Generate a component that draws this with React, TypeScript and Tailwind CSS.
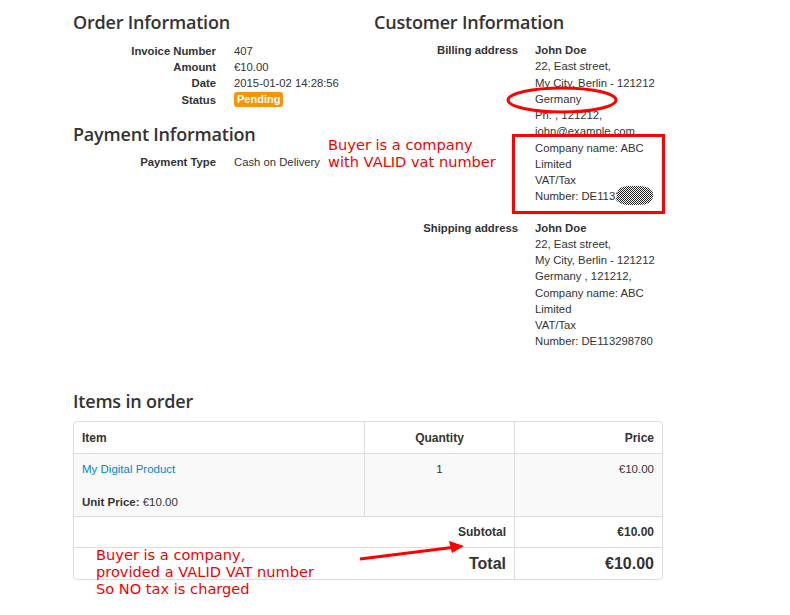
import React from "react";

const H = ({ children, className = "" }: { children: React.ReactNode; className?: string }) => (
  <h2 className={`font-['Open_Sans',sans-serif] text-[18px] leading-6 font-semibold tracking-[-0.2px] text-[#333] ${className}`}>{children}</h2>
);

const Row = ({ label, children }: { label: string; children: React.ReactNode }) => (
  <div className="flex">
    <div className="w-[143px] shrink-0 text-right font-bold">{label}</div>
    <div className="ml-[18px]">{children}</div>
  </div>
);

export default function App() {
  const red = "text-[#f40000] font-['DejaVu_Sans',sans-serif] text-[14.6px] leading-[17px]";
  return (
    <div className="relative w-[790px] h-[615px] overflow-hidden bg-white font-['Liberation_Sans',Arial,sans-serif] text-[11.3px] text-[#333]">
      <div className="pl-[73px] pt-[10px] w-[663px]">
        <div className="flex">
          {/* left column */}
          <div className="w-[301px] shrink-0">
            <H>Order Information</H>
            <div className="mt-[9px] leading-4">
              <Row label="Invoice Number">407</Row>
              <Row label="Amount">€10.00</Row>
              <Row label="Date">2015-01-02 14:28:56</Row>
              <div className="flex items-center h-[17px]">
                <div className="w-[143px] shrink-0 text-right font-bold">Status</div>
                <div className="ml-[18px] flex">
                  <span className="inline-block rounded-[3px] bg-[#f89406] px-[3px] text-[11px] leading-[15px] font-bold text-white">Pending</span>
                </div>
              </div>
            </div>
            <H className="mt-[14px]">Payment Information</H>
            <div className="mt-[8px] leading-4">
              <Row label="Payment Type">Cash on Delivery</Row>
            </div>
          </div>
          {/* right column */}
          <div className="flex-1">
            <H>Customer Information</H>
            <div className="mt-[8px] leading-[16.25px]">
              <div className="flex">
                <div className="w-[144px] shrink-0 text-right font-bold">Billing address</div>
                <div className="ml-[17px] w-[128px]">
                  <div className="font-bold">John Doe</div>
                  <div>22, East street,</div>
                  <div>My City, Berlin - 121212</div>
                  <div>Germany</div>
                  <div>Ph: , 121212,</div>
                  <div>john@example.com</div>
                  <div>Company name: ABC</div>
                  <div>Limited</div>
                  <div>VAT/Tax</div>
                  <div>Number: DE113298780</div>
                </div>
              </div>
              <div className="flex mt-[15px]">
                <div className="w-[144px] shrink-0 text-right font-bold">Shipping address</div>
                <div className="ml-[17px] w-[128px]">
                  <div className="font-bold">John Doe</div>
                  <div>22, East street,</div>
                  <div>My City, Berlin - 121212</div>
                  <div>Germany , 121212,</div>
                  <div>Company name: ABC</div>
                  <div>Limited</div>
                  <div>VAT/Tax</div>
                  <div>Number: DE113298780</div>
                </div>
              </div>
            </div>
          </div>
        </div>

        <H className="mt-[39.5px]">Items in order</H>
        <div className="mt-[8px] w-[590px] rounded-[4px] border border-[#ddd] overflow-hidden leading-4 text-[11.5px]">
          <div className="grid grid-cols-[290px_150px_1fr] font-bold text-[12px]">
            <div className="px-[8px] pt-[8px] pb-[7px]">Item</div>
            <div className="px-[8px] pt-[8px] pb-[7px] text-center border-l border-[#ddd]">Quantity</div>
            <div className="px-[8px] pt-[8px] pb-[7px] text-right border-l border-[#ddd]">Price</div>
          </div>
          <div className="grid grid-cols-[290px_150px_1fr] bg-[#f9f9f9] border-t border-[#ddd]">
            <div className="px-[8px] pt-[7px] pb-[6px]">
              <div className="text-[#0088cc]">My Digital Product</div>
              <div className="mt-[17px]"><span className="font-bold">Unit Price:</span> €10.00</div>
            </div>
            <div className="px-[8px] pt-[7px] text-center border-l border-[#ddd]">1</div>
            <div className="px-[8px] pt-[7px] text-right border-l border-[#ddd]">€10.00</div>
          </div>
          <div className="grid grid-cols-[440px_1fr] border-t border-[#ddd] font-bold text-[12px]">
            <div className="px-[8px] py-[7px] text-right">Subtotal</div>
            <div className="px-[8px] py-[7px] text-right border-l border-[#ddd]">€10.00</div>
          </div>
          <div className="grid grid-cols-[440px_1fr] border-t border-[#ddd] font-bold text-[16px]">
            <div className="px-[8px] py-[7px] leading-[17px] text-right">Total</div>
            <div className="px-[8px] py-[7px] leading-[17px] text-right border-l border-[#ddd]">€10.00</div>
          </div>
        </div>
      </div>

      {/* annotations */}
      <div className={`absolute left-[328px] top-[136px] ${red}`}>
        <div>Buyer is a company</div>
        <div>with VALID vat number</div>
      </div>
      <div className={`absolute left-[96px] top-[546px] ${red}`}>
        <div>Buyer is a company,</div>
        <div>provided a VALID VAT number</div>
        <div>So NO tax is charged</div>
      </div>
      <svg className="absolute left-0 top-0 pointer-events-none" width="790" height="615">
        <defs>
          <pattern id="chk" width="2" height="2" patternUnits="userSpaceOnUse">
            <rect width="2" height="2" fill="#fff" />
            <rect width="1" height="1" fill="#222" />
            <rect x="1" y="1" width="1" height="1" fill="#222" />
          </pattern>
        </defs>
        <ellipse cx="562" cy="100" rx="54" ry="12" fill="none" stroke="#f00" strokeWidth="3" />
        <rect x="513.5" y="135.5" width="150" height="77" fill="none" stroke="#f00" strokeWidth="3" />
        <path d="M618 190 Q622 185 640 186 Q655 187 653 197 Q651 206 636 205 Q620 206 616 200 Z" fill="url(#chk)" />
        <line x1="360" y1="559" x2="452" y2="547.5" stroke="#f00" strokeWidth="3" />
        <polygon points="464,546 449,541 452,553" fill="#f00" />
      </svg>
    </div>
  );
}
